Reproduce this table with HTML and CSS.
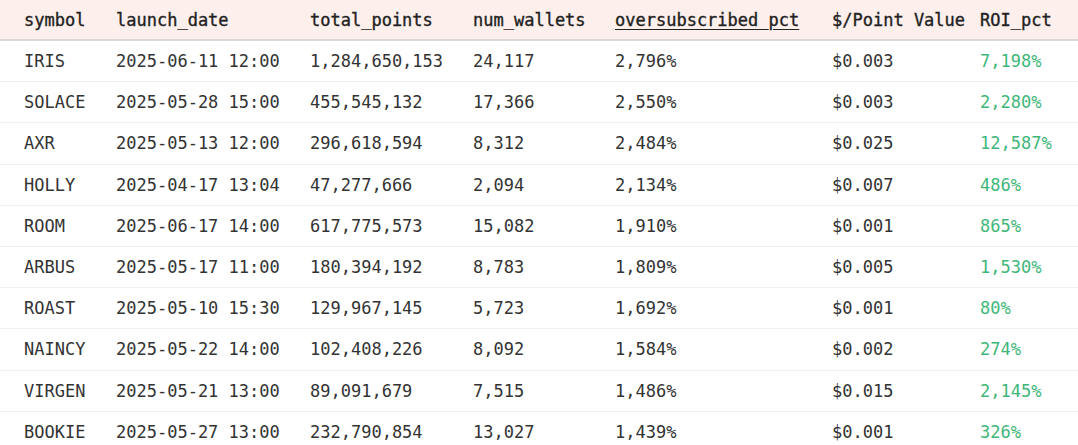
FILE: index.html
```html
<!DOCTYPE html>
<html>
<head>
<meta charset="utf-8">
<link rel="stylesheet" href="styles.css">
</head>
<body>
<table class="grid">
<colgroup>
<col class="c1"><col class="c2"><col class="c3"><col class="c4"><col class="c5"><col class="c6"><col class="c7">
</colgroup>
<thead>
<tr><th>symbol</th><th>launch_date</th><th>total_points</th><th>num_wallets</th><th><span class="sorted">oversubscribed_pct</span></th><th>$/Point Value</th><th>ROI_pct</th></tr>
</thead>
<tbody>
<tr><td>IRIS</td><td>2025-06-11 12:00</td><td>1,284,650,153</td><td>24,117</td><td>2,796%</td><td>$0.003</td><td class="pos">7,198%</td></tr>
<tr><td>SOLACE</td><td>2025-05-28 15:00</td><td>455,545,132</td><td>17,366</td><td>2,550%</td><td>$0.003</td><td class="pos">2,280%</td></tr>
<tr><td>AXR</td><td>2025-05-13 12:00</td><td>296,618,594</td><td>8,312</td><td>2,484%</td><td>$0.025</td><td class="pos">12,587%</td></tr>
<tr><td>HOLLY</td><td>2025-04-17 13:04</td><td>47,277,666</td><td>2,094</td><td>2,134%</td><td>$0.007</td><td class="pos">486%</td></tr>
<tr><td>ROOM</td><td>2025-06-17 14:00</td><td>617,775,573</td><td>15,082</td><td>1,910%</td><td>$0.001</td><td class="pos">865%</td></tr>
<tr><td>ARBUS</td><td>2025-05-17 11:00</td><td>180,394,192</td><td>8,783</td><td>1,809%</td><td>$0.005</td><td class="pos">1,530%</td></tr>
<tr><td>ROAST</td><td>2025-05-10 15:30</td><td>129,967,145</td><td>5,723</td><td>1,692%</td><td>$0.001</td><td class="pos">80%</td></tr>
<tr><td>NAINCY</td><td>2025-05-22 14:00</td><td>102,408,226</td><td>8,092</td><td>1,584%</td><td>$0.002</td><td class="pos">274%</td></tr>
<tr><td>VIRGEN</td><td>2025-05-21 13:00</td><td>89,091,679</td><td>7,515</td><td>1,486%</td><td>$0.015</td><td class="pos">2,145%</td></tr>
<tr><td>BOOKIE</td><td>2025-05-27 13:00</td><td>232,790,854</td><td>13,027</td><td>1,439%</td><td>$0.001</td><td class="pos">326%</td></tr>
</tbody>
</table>
</body>
</html>
```
FILE: styles.css
```css
html, body {
  margin: 0;
  padding: 0;
  background: #ffffff;
  overflow: hidden;
}
.grid {
  width: 1078px;
  border-collapse: collapse;
  table-layout: fixed;
  font-family: "DejaVu Sans Mono", "Liberation Mono", monospace;
  font-size: 17px;
  color: #2b2b2b;
}
.c1 { width: 104px; }
.c2 { width: 194px; }
.c3 { width: 163px; }
.c4 { width: 142px; }
.c5 { width: 217px; }
.c6 { width: 148px; }
.c7 { width: 110px; }
.grid th {
  background: #fcefec;
  height: 39px;
  padding: 0 12px;
  text-align: left;
  font-weight: normal;
  -webkit-text-stroke: 0.35px #222222;
  color: #222222;
  border-bottom: 2px solid #dcd6d4;
  white-space: nowrap;
}
.grid td {
  height: 40.2px;
  padding: 0 12px;
  border-bottom: 1px solid #f0f0f0;
  white-space: nowrap;
  color: #333333;
}
.grid th:first-child, .grid td:first-child {
  padding-left: 24px;
}
.sorted {
  text-decoration: underline;
  text-underline-offset: 3px;
}
.grid td.pos {
  color: #3fb77a;
}
```
